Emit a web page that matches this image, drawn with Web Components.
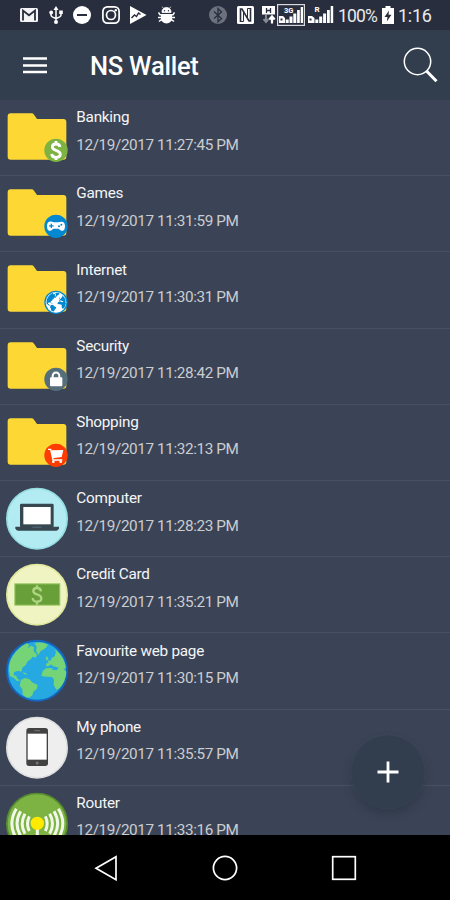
<!DOCTYPE html>
<html lang="en">
<head>
<meta charset="utf-8">
<title>NS Wallet</title>
<style>
    html, body { margin: 0; height: 100%; background: #000; }
</style>
</head>
<body>
<wallet-screen></wallet-screen>

<script>
// icon drawings, each one in its own viewBox
const ICONS = {
    gmail: ["0 0 18 18", `<rect y="2" width="18" height="14" rx="1.500" fill="#f4f4f6"/><path d="M3 14.500V4.500L9 9.300l6-4.800v10" fill="none" stroke="#282e3e" stroke-width="1.800"/>`],
    usb: ["0 0 14 18", `<g fill="none" stroke="#fff" stroke-width="1.500"><path d="M7 2v14M2 6v3q0 2 5 3.500Q12 11 12 9V5"/></g><path d="M7 0l2.500 4h-5z" fill="#fff"/><circle cx="7" cy="16" r="2" fill="#fff"/><circle cx="2.200" cy="6.500" r="1.900" fill="#fff"/><path d="M10.200 4.500h3.600v3.600h-3.600z" fill="#fff"/>`],
    dnd: ["0 0 18 18", `<circle cx="9" cy="9" r="9" fill="#fff"/><path d="M4 9h10" stroke="#282e3e" stroke-width="2"/>`],
    insta: ["0 0 18 18", `<g fill="none" stroke="#fff" stroke-width="1.700"><rect x=".9" y=".9" width="16.200" height="16.200" rx="4.500"/><circle cx="9" cy="9" r="4.500"/></g><circle cx="13.800" cy="4.200" r="1.200" fill="#fff"/>`],
    play: ["0 0 17 18", `<path d="M0 0l16.500 9L0 18z" fill="#fff"/><path d="M1.500 12l3-3 2 1.500L8.500 7l2 1.500" fill="none" stroke="#282e3e" stroke-width="1.500"/>`],
    bug: ["0 0 17 18", `<path d="M4 6.500V5.500a4.500 4 0 0 1 9 0v1zM5.500 2.500L4.300.7M11.500 2.500L12.700.7" fill="#fff" stroke="#fff" stroke-width=".8"/><path d="M.5 6.500L2 8.800h13l1.500-2.300M0 11.500h17M1 15.500l2-1.500h11l2 1.500" fill="none" stroke="#fff" stroke-width="1.500"/><path d="M3 8h11v4.500a5.500 5 0 0 1-11 0z" fill="#fff"/><circle cx="6.500" cy="4.800" r=".7" fill="#282e3e"/><circle cx="10.500" cy="4.800" r=".7" fill="#282e3e"/>`],
    bluetooth: ["0 0 18 18", `<circle cx="9" cy="9" r="9" fill="#6d717c"/><path d="M5 5.500l7.500 7L9 16V2.500L12.500 6 5 12.500" fill="none" stroke="#282e3e" stroke-width="1.300"/>`],
    nfc: ["0 0 17 18", `<rect width="17" height="18" rx="1.500" fill="#fff"/><path d="M3.500 16V3h1.500l7 12h1.500V2" fill="none" stroke="#282e3e" stroke-width="1.600"/><path d="M6.500 6v9.500H3.500M10.500 12V2.500h3" fill="none" stroke="#282e3e" stroke-width="1"/>`],
    data: ["0 0 14 18", `<path d="M0 0h13v8.500H0z" fill="#fff"/><path d="M4.500 2v5M8.500 2v5M4.500 4.500h4" stroke="#282e3e" stroke-width="1.300"/><path d="M4 9v6M1.500 13.200L4 16l2.500-2.800" fill="none" stroke="#878b95" stroke-width="1.900"/><path d="M10 17.500V11M7.300 13.500l2.700-3 2.700 3" fill="none" stroke="#fff" stroke-width="2.200"/>`],
    signal3g: ["0 0 28 22", `<rect x=".6" y=".6" width="26.800" height="20.800" fill="none" stroke="#d7d8dc" stroke-width="1.200"/><text x="7" y="8.500" font-family="Roboto, sans-serif" font-size="7.500" font-weight="700" fill="#fff">3G</text><path d="M2 12h4l2 2v5H2zM8.700 15.500h3V19h-3zM12.500 12.500h3V19h-3zM16.300 9.500h3V19h-3zM20.100 6h2.700v13h-2.700zM23.700 3h2.300v16h-2.300z" fill="#fff"/><path d="M3.500 14.500h2v2h-2z" fill="#282e3e"/>`],
    signalR: ["0 0 26 22", `<text x="6.500" y="7.800" font-family="Roboto, sans-serif" font-size="8" font-weight="700" fill="#fff">R</text><path d="M0 12h4l2.500 2v5H0zM7.300 15.500h3V19h-3zM11.200 12.500h3V19h-3zM15.100 9.500h3V19h-3zM19 6h2.800v13H19zM22.700 2h2.500v17h-2.500z" fill="#fff"/><path d="M1.500 14.500h2v2h-2z" fill="#282e3e"/>`],
    battery: ["0 0 12 18", `<path d="M0 2h3.500V0h5v2H12v16H0z" fill="#fff"/><path d="M7 4.500L2.500 11H5.500L4.800 15.500 9.500 8.800H6.500z" fill="#282e3e"/>`],
    menu: ["0 0 24 17", `<path d="M0 1.500h24M0 8.500h24M0 15h24" stroke="#fff" stroke-width="2.400"/>`],
    search: ["0 0 36 36", `<circle cx="14.500" cy="14.500" r="13.200" fill="none" stroke="#fff" stroke-width="1.500"/><path d="M23.500 24L33.500 34.200" stroke="#fff" stroke-width="3"/>`],
    plus: ["0 0 22 22", `<path d="M11 .5v21M.5 11h21" stroke="#fff" stroke-width="2.800"/>`],
    back: ["0 0 24 26", `<path d="M22 1.700v23L2 13.200z" fill="none" stroke="#fff" stroke-width="1.700"/>`],
    home: ["0 0 26 26", `<circle cx="13" cy="13" r="11.600" fill="none" stroke="#fff" stroke-width="1.700"/>`],
    recent: ["0 0 26 26", `<rect x="1.700" y="1.700" width="22.600" height="22.600" fill="none" stroke="#fff" stroke-width="1.700"/>`]
};

// one globe is shared by the big picture and the small badge
const LAND = `<path d="M27 112Q25 83 47 57L66 39l14-8 7 4-3 11 8-8 10 4-1 12 10 11-3 9-10-3-6 8-9 6-6 11-10 8-3 13-5-3-10 1-7 3-1 9 8 1 2 8 9 7-9 1-9-9-12-6z"/>
<path d="M66 53l9-6 6 7-7 6z" fill-opacity=".55"/>
<path d="M104 30q22-5 40 5l-5 8-9 7-8 4-7 12-7-12 2-12z"/>
<path d="M63 140l12-5 14 4 7 9 17 8-3 12-10 8-3 11-10 7q-14-1-19-10l-1-15-8-11z"/>
<path d="M124 129l4-15 10-8 17-1 3 5 12 2 6-8-9-3-8-1-6-6-6 5-8 1-1-8 8-3-3-7 9 1 3-8 9-5 4-14-5-9q31 24 35 59l-8 1 9 9q-1 29-21 50l-9 4-8-14 1-16-6-8-17-1z"/>
<path d="M137 76l4-7 4 8-5 6zM67 118l10 2 5 5-9-2z"/>`;

const disc = (fill, ring) => `<circle cx="111" cy="113" r="90.500" fill="${fill}" stroke="${ring}" stroke-width="5"/>`;

const folder = (color, badge) => `<path d="M23 49q0-9 9-9h63q4 0 7 4l9 13h79q9 0 9 9v104q0 9-9 9H32q-9 0-9-9z" fill="#fdd835"/><circle cx="168" cy="151" r="35" fill="${color}"/>${badge}`;

// entry pictures are drawn on a 210x228 grid
const PICTURES = {
    banking: folder("#7cb342", `<path d="M180 141q-1-9-12-9-11 0-11 9 0 6 11 10 13 4 13 12 0 9-13 9-12 0-13-10M168 123v9M168 170v10" fill="none" stroke="#fff" stroke-width="8.500"/>`),
    games: folder("#0288d1", `<path d="M141 151c0-18 14-15 20-12h14c8-3 20-5 20 12 0 19-13 14-19 7h-16c-6 7-19 12-19-7z" fill="#fff"/><path d="M154 143v13M147 149.500h14" stroke="#0288d1" stroke-width="4"/><circle cx="177" cy="151" r="3" fill="#0288d1"/><circle cx="184" cy="146" r="3" fill="#0288d1"/>`),
    internet: folder("#0288d1", `<circle cx="168" cy="151" r="31" fill="#fff"/><g fill="#0288d1" transform="translate(130.200 112.500) scale(.34)">${LAND}</g>`),
    security: folder("#546e7a", `<path d="M158 148v-7a10 10.500 0 0 1 20 0v7" fill="none" stroke="#fff" stroke-width="6"/><rect x="150" y="145" width="37" height="27" rx="3" fill="#fff"/>`),
    shopping: folder("#ff3d00", `<path d="M144 133h8l7 32h28" fill="none" stroke="#fff" stroke-width="4"/><path d="M153 136l37-1-5 21-28 4z" fill="#fff"/><circle cx="160" cy="170" r="4" fill="#fff"/><circle cx="182" cy="170" r="4" fill="#fff"/>`),
    computer: disc("#b2ebf2", "#96dde3") + `<rect x="60" y="68" width="101" height="71" rx="4" fill="#37474f"/><path d="M70 78h82v52H70z" fill="#fff"/><path d="M46 137h131v5q-2 7-8 7H54q-6 0-8-7z" fill="#37474f"/><path d="M97 137h28v3H97z" fill="#546e7a"/>`,
    card: disc("#f0f4c3", "#dfe89a") + `<rect x="44.500" y="80.500" width="135" height="64" fill="#689f38" stroke="#9ccc65" stroke-width="3"/><path d="M123 103q-1-10-12-10-11 0-11 9 0 7 11 10 13 4 13 12 0 10-13 10-12 0-13-11M111 85v9M111 134v9" fill="none" stroke="#aed581" stroke-width="7"/>`,
    globe: `<circle cx="111" cy="113" r="90" fill="#26a9e0" stroke="#1565c0" stroke-width="6"/><g fill="#74d477">${LAND}</g>`,
    phone: disc("#eeeeee", "#dedede") + `<rect x="79" y="54" width="65" height="114" rx="8" fill="#424242"/><path d="M83 71h57v78H83z" fill="#fff"/><path d="M103 62h17" stroke="#757575" stroke-width="3"/><circle cx="111.500" cy="159" r="4.500" fill="#757575"/>`,
    router: disc("#7cb342", "#558b2f") + `<path d="M88 91q-11 22 0 44M75 83q-17 30 0 60M62 76q-22 37 0 74M49 68q-27 45 0 90M136 91q11 22 0 44M149 83q17 30 0 60M162 76q22 37 0 74M175 68q27 45 0 90" fill="none" stroke="#f1f8e9" stroke-width="9"/><path d="M112 125v75" stroke="#f1f8e9" stroke-width="9"/><circle cx="112" cy="112" r="20" fill="#ffea00"/>`
};

const ENTRIES = [
    ["banking", "Banking", "12/19/2017 11:27:45 PM"],
    ["games", "Games", "12/19/2017 11:31:59 PM"],
    ["internet", "Internet", "12/19/2017 11:30:31 PM"],
    ["security", "Security", "12/19/2017 11:28:42 PM"],
    ["shopping", "Shopping", "12/19/2017 11:32:13 PM"],
    ["computer", "Computer", "12/19/2017 11:28:23 PM"],
    ["card", "Credit Card", "12/19/2017 11:35:21 PM"],
    ["globe", "Favourite web page", "12/19/2017 11:30:15 PM"],
    ["phone", "My phone", "12/19/2017 11:35:57 PM"],
    ["router", "Router", "12/19/2017 11:33:16 PM"]
];

// every element fills its own open shadow root once
class WalletElement extends HTMLElement {
    connectedCallback() {
        if (this.shadowRoot) return;
        this.attachShadow({ mode: "open" }).innerHTML = this.render();
    }
}

customElements.define("ui-icon", class extends WalletElement {
    render() {
        let [box, body] = ICONS[this.getAttribute("name")];
        let [, , w, h] = box.split(" ");
        return `<style>:host{display:block;flex:none}svg{display:block}</style>` +
            `<svg width="${w}" height="${h}" viewBox="${box}">${body}</svg>`;
    }
});

customElements.define("status-bar", class extends WalletElement {
    render() {
        return `<style>
            :host{display:flex;justify-content:space-between;align-items:center;flex:none;height:30px;box-sizing:border-box;padding:0 19px 0 20px;background:#282e3e;color:#e9eaec}
            div{display:flex;align-items:center}
            .left{gap:10.500px}
            .right{font-size:17.500px;line-height:30px}
            .right ui-icon{margin-right:3px}
            .right ui-icon[name=bluetooth]{margin-right:10px}
            .right ui-icon[name=nfc]{margin-right:8px}
            .right ui-icon[name=data]{margin-right:1px}
            .pct{width:40px;margin:1px 4px 0 1px;letter-spacing:-.8px}
            .time{width:33px;margin:1px 0 0 1px;font-size:18px;letter-spacing:-.3px}
            span{white-space:nowrap}
        </style>
        <div class="left">${["gmail", "usb", "dnd", "insta", "play", "bug"].map(n => `<ui-icon name="${n}"></ui-icon>`).join("")}</div>
        <div class="right">${["bluetooth", "nfc", "data", "signal3g", "signalR"].map(n => `<ui-icon name="${n}"></ui-icon>`).join("")}<span class="pct">100%</span><ui-icon name="battery"></ui-icon><span class="time">1:16</span></div>`;
    }
});

customElements.define("app-bar", class extends WalletElement {
    render() {
        return `<style>
            :host{display:flex;align-items:center;flex:none;height:70px;box-sizing:border-box;padding:0 11px 0 23px;background:#323e4e;color:#fff}
            h1{flex:1;margin:2px 0 0 43px;font-size:25.500px;font-weight:500;line-height:32px;letter-spacing:-.25px}
        </style>
        <ui-icon name="menu"></ui-icon><h1><slot></slot></h1><ui-icon name="search"></ui-icon>`;
    }
});

customElements.define("wallet-entry", class extends WalletElement {
    render() {
        return `<style>
            :host{display:flex;flex:none;height:76.200px;box-sizing:border-box;border-bottom:1px solid #465261}
            svg{flex:none;width:70px;height:76.250px}
            div{padding:7.300px 0 0 6.300px;white-space:nowrap}
            p{margin:0;font-size:15.300px;line-height:20px;letter-spacing:-.25px;color:#f5f5f6}
            time{display:block;margin-top:7.400px;font-size:15.300px;line-height:21px;letter-spacing:-.4px;color:#cbcdd0}
        </style>
        <svg viewBox="0 0 210 228.750">${PICTURES[this.getAttribute("picture")]}</svg>
        <div><p><slot></slot></p><time><slot name="date"></slot></time></div>`;
    }
});

customElements.define("add-button", class extends WalletElement {
    render() {
        return `<style>
            :host{display:flex;align-items:center;justify-content:center;width:74px;height:74px;border-radius:50%;background:#323e4e;box-shadow:0 5px 9px rgba(30,34,52,.35),0 0 1px #536070}
        </style><ui-icon name="plus"></ui-icon>`;
    }
});

customElements.define("nav-bar", class extends WalletElement {
    render() {
        return `<style>
            :host{display:flex;flex:none;align-items:center;justify-content:space-between;height:65px;box-sizing:border-box;padding:0 93px 0 94px;background:#000}
        </style>
        <ui-icon name="back"></ui-icon><ui-icon name="home"></ui-icon><ui-icon name="recent"></ui-icon>`;
    }
});

customElements.define("wallet-screen", class extends WalletElement {
    render() {
        return `<style>
            :host{display:flex;flex-direction:column;width:450px;height:900px;overflow:hidden;font-family:Roboto,sans-serif}
            main{position:relative;flex:1;min-height:0;overflow:hidden;background:#3b4456}
            add-button{position:absolute;right:25.500px;bottom:26px}
        </style>
        <status-bar></status-bar>
        <app-bar>NS Wallet</app-bar>
        <main>
            ${ENTRIES.map(([picture, name, date]) => `<wallet-entry picture="${picture}">${name}<span slot="date">${date}</span></wallet-entry>`).join("")}
            <add-button></add-button>
        </main>
        <nav-bar></nav-bar>`;
    }
});
</script>
</body>
</html>
